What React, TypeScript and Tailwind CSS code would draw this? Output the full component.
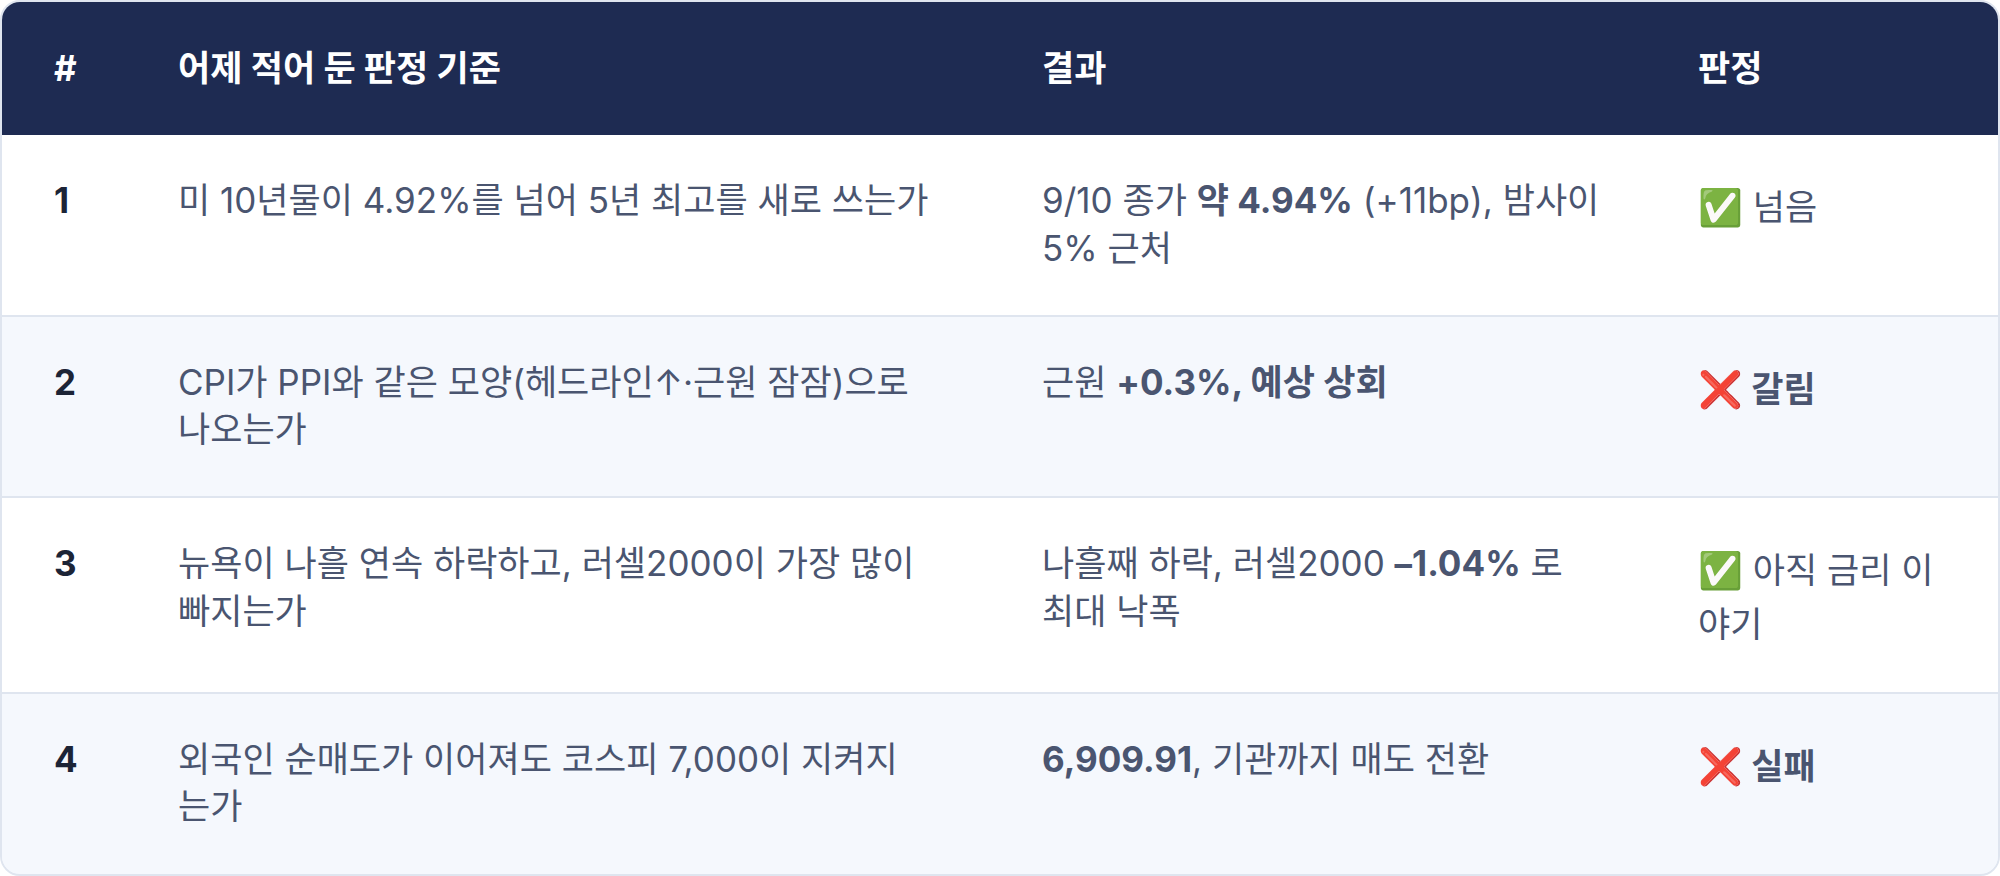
import React from 'react';

type Row = {
  no: string;
  criterion: React.ReactNode;
  result: React.ReactNode;
  mark: string;
  verdict: string;
  strong: boolean;
};

const rows: Row[] = [
  {
    no: '1',
    criterion: '미 10년물이 4.92%를 넘어 5년 최고를 새로 쓰는가',
    result: (
      <>
        9/10 종가 <b className="font-bold">약 4.94%</b> (+11bp), 밤사이
        <br />
        5% 근처
      </>
    ),
    mark: '✅',
    verdict: '넘음',
    strong: false,
  },
  {
    no: '2',
    criterion: 'CPI가 PPI와 같은 모양(헤드라인↑·근원 잠잠)으로 나오는가',
    result: (
      <>
        근원 <b className="font-bold">+0.3%, 예상 상회</b>
      </>
    ),
    mark: '❌',
    verdict: '갈림',
    strong: true,
  },
  {
    no: '3',
    criterion: '뉴욕이 나흘 연속 하락하고, 러셀2000이 가장 많이 빠지는가',
    result: (
      <>
        나흘째 하락, 러셀2000 <b className="font-bold">–1.04%</b> 로
        <br />
        최대 낙폭
      </>
    ),
    mark: '✅',
    verdict: '아직 금리 이야기',
    strong: false,
  },
  {
    no: '4',
    criterion: (
      <>
        외국인 순매도가 이어져도 코스피 7,000이 지켜지
        <br />
        는가
      </>
    ),
    result: (
      <>
        <b className="font-bold">6,909.91</b>, 기관까지 매도 전환
      </>
    ),
    mark: '❌',
    verdict: '실패',
    strong: true,
  },
];

export default function App() {
  return (
    <div className="w-[2000px] h-[876px] bg-white font-['Inter','Noto_Sans_CJK_KR',sans-serif]">
      <div className="h-full overflow-hidden rounded-[20px] border-2 border-[#dfe5ef] bg-[#f5f8fd]">
        <table className="w-full table-fixed border-collapse text-[35px] leading-[1.35]">
          <colgroup>
            <col className="w-[124px]" />
            <col className="w-[864px]" />
            <col className="w-[656px]" />
            <col />
          </colgroup>
          <thead>
            <tr className="bg-[#1e2b52] text-left text-white">
              <th className="px-[52px] py-[43px] font-bold">#</th>
              <th className="px-[52px] py-[43px] font-bold">어제 적어 둔 판정 기준</th>
              <th className="px-[52px] py-[43px] font-bold">결과</th>
              <th className="px-[52px] py-[43px] font-bold">판정</th>
            </tr>
          </thead>
          <tbody>
            {rows.map((row, i) => (
              <tr
                key={row.no}
                className={`align-top text-[#4a5570] ${i % 2 === 1 ? 'bg-[#f5f8fd]' : 'bg-white'} ${
                  i < rows.length - 1 ? 'border-b-2 border-[#dfe5ef]' : ''
                }`}
              >
                <td className="px-[52px] pt-[42px] pb-[43px] font-bold text-[#1c2436]">{row.no}</td>
                <td className="px-[52px] pt-[42px] pb-[43px]">{row.criterion}</td>
                <td className="pl-[52px] pr-[34px] pt-[42px] pb-[43px]">{row.result}</td>
                <td className={`px-[52px] pt-[42px] pb-[43px] ${row.strong ? 'font-bold' : ''}`}>
                  <span className="text-[36px] leading-[1.7]">{row.mark}</span> {row.verdict}
                </td>
              </tr>
            ))}
          </tbody>
        </table>
      </div>
    </div>
  );
}
